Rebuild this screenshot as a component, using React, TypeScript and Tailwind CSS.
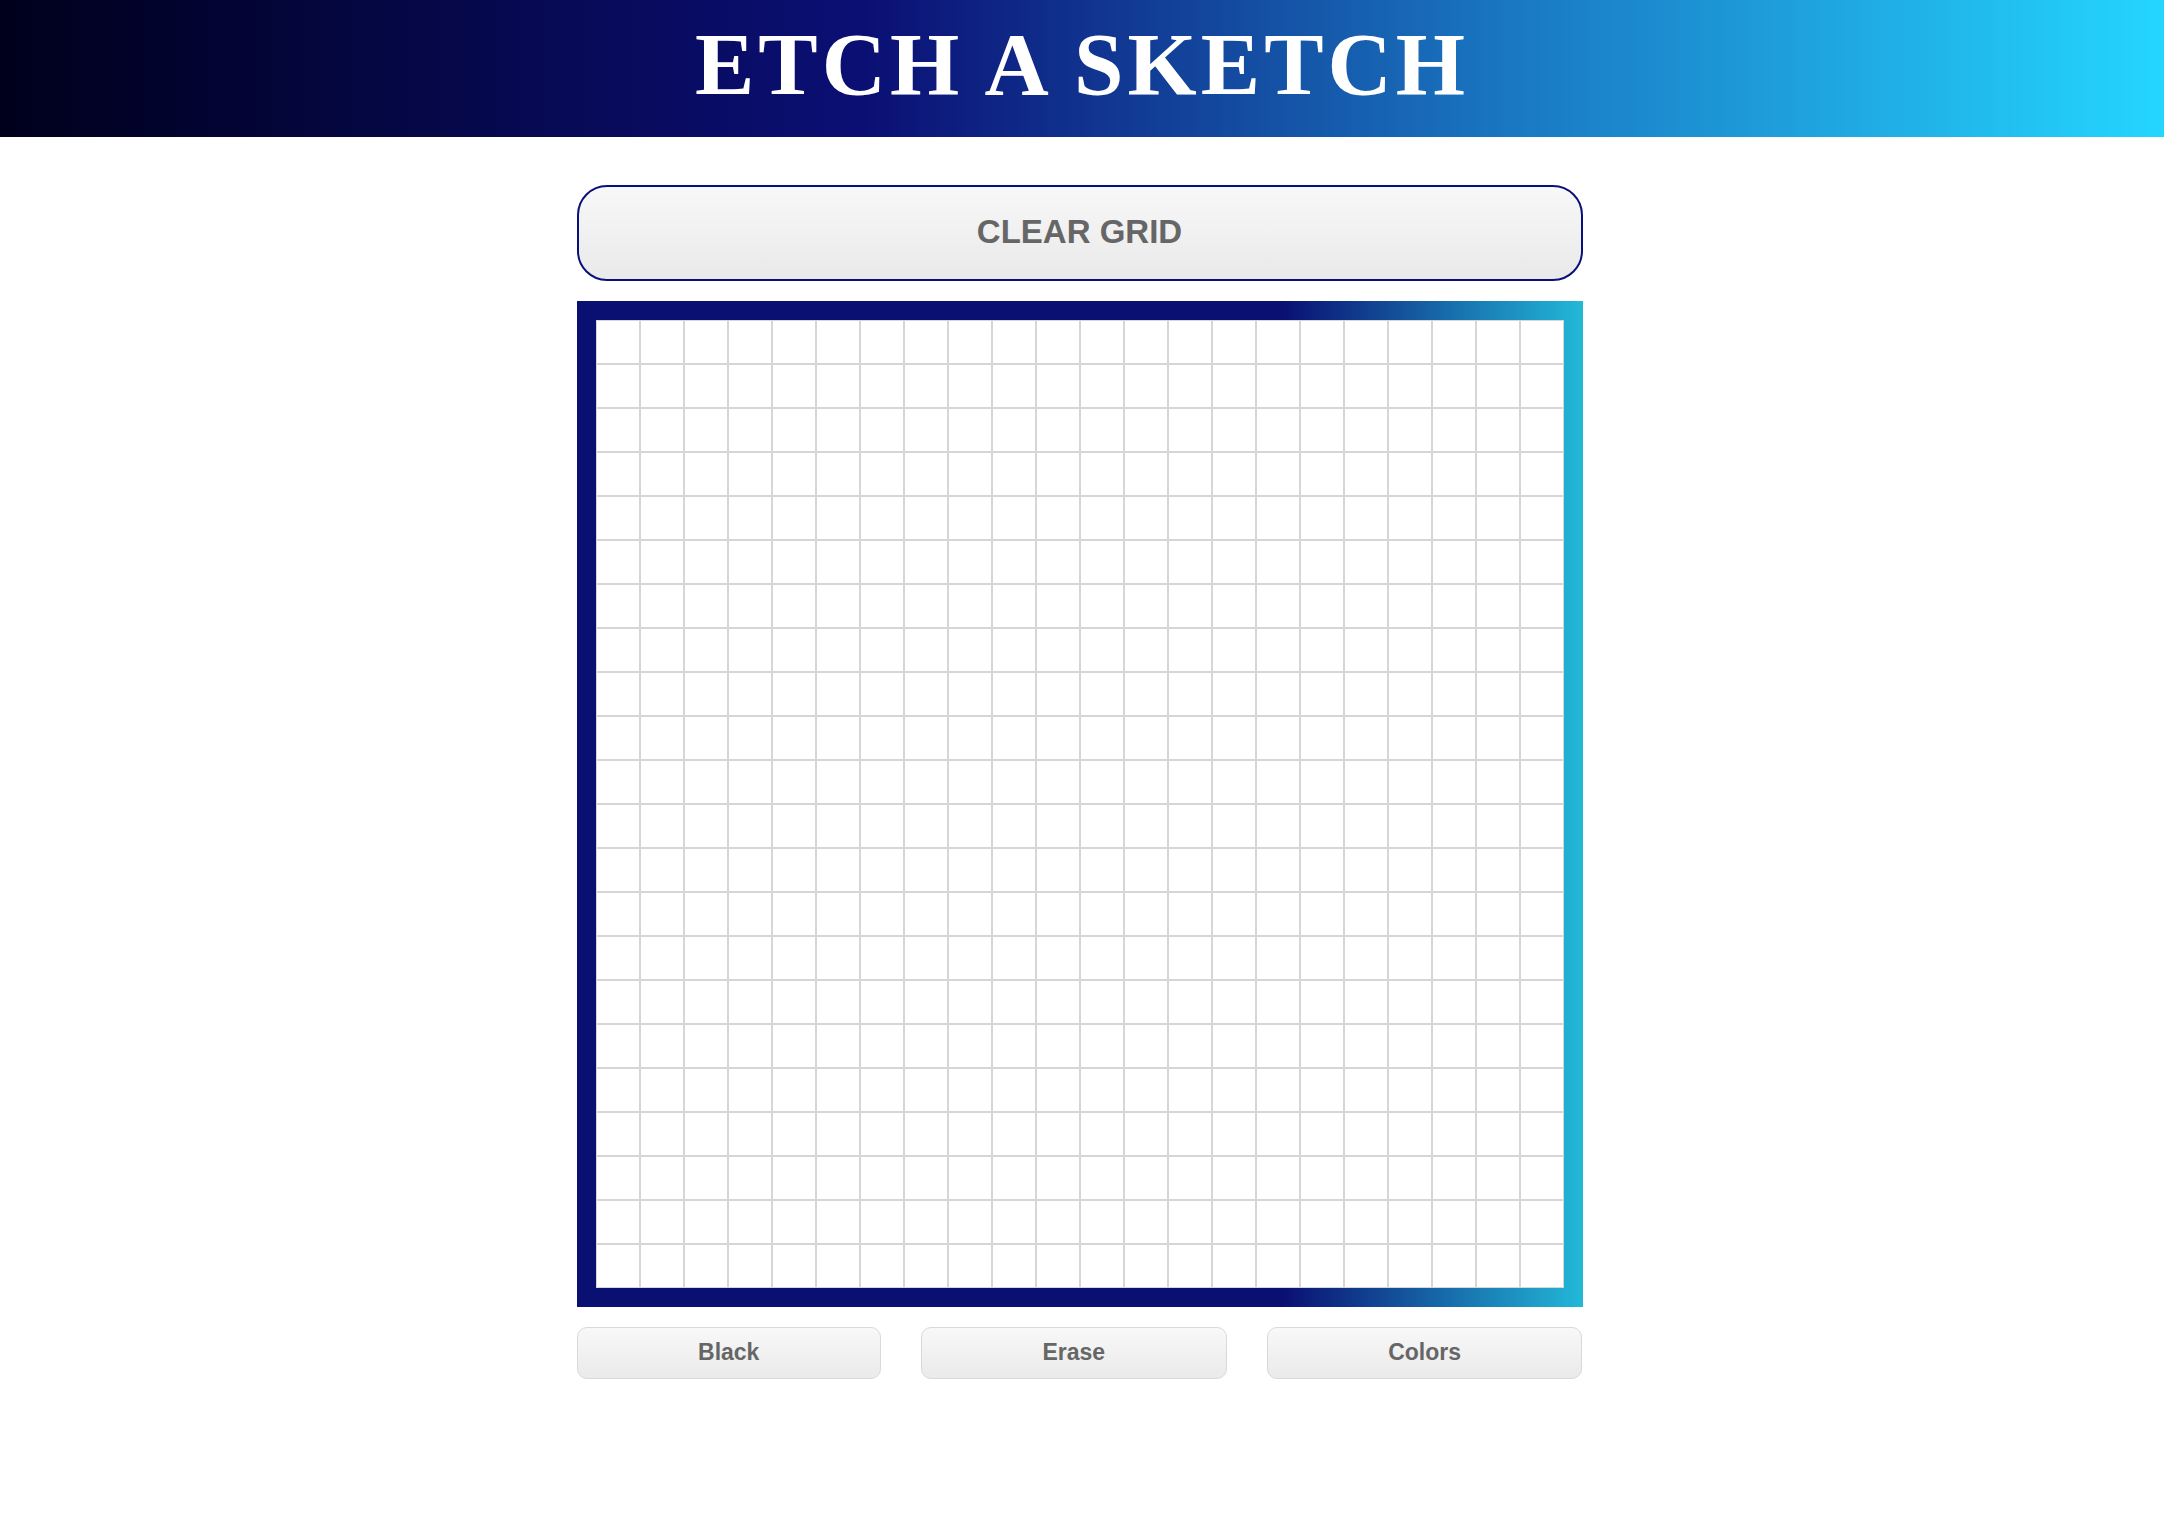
import React, { useState } from "react";

const SIZE = 22;

type Mode = "black" | "erase" | "colors";

function randomColor() {
  const h = Math.floor(Math.random() * 360);
  return `hsl(${h}, 80%, 55%)`;
}

export default function App() {
  const [cells, setCells] = useState<string[]>(() =>
    Array(SIZE * SIZE).fill("#ffffff")
  );
  const [mode, setMode] = useState<Mode>("black");

  const paint = (i: number) => {
    const color =
      mode === "black" ? "#000000" : mode === "erase" ? "#ffffff" : randomColor();
    setCells((prev) => {
      const next = [...prev];
      next[i] = color;
      return next;
    });
  };

  const clear = () => setCells(Array(SIZE * SIZE).fill("#ffffff"));

  return (
    <div className="min-h-screen bg-white font-['Liberation_Sans',Arial,sans-serif]">
      <header className="flex h-[137px] w-[2164px] items-center justify-center bg-[linear-gradient(to_right,#00001c_0%,#0b0f74_40%,#1a78c2_70%,#24d6ff_100%)] pb-[8px]">
        <h1 className="font-['Liberation_Serif','Times_New_Roman',serif] text-[89px] font-bold leading-none tracking-[4px] text-white">
          ETCH A SKETCH
        </h1>
      </header>

      <main className="flex justify-center pr-[11px] pt-[48px]">
        <div className="flex w-[1006px] flex-col">
          <button
            onClick={clear}
            className="h-[96px] w-full rounded-[30px] border-2 border-[#0b0f78] bg-[linear-gradient(to_bottom,#f8f8f8,#e9e9e9)] pb-[2px] text-[33px] font-bold text-[#666666]"
          >
            CLEAR GRID
          </button>

          <div className="mt-[20px] bg-[linear-gradient(to_right,#0a0f72_0%,#0a0f72_70%,#22b8d8_100%)] p-[19px]">
            <div className="grid grid-cols-[repeat(22,44px)] grid-rows-[repeat(22,44px)] bg-white">
              {cells.map((c, i) => (
                <div
                  key={i}
                  onMouseEnter={() => paint(i)}
                  className="border border-[#d6d6d6]"
                  style={{ backgroundColor: c }}
                />
              ))}
            </div>
          </div>

          <div className="mt-[20px] flex gap-[40px]">
            {(
              [
                ["black", "Black"],
                ["erase", "Erase"],
                ["colors", "Colors"],
              ] as [Mode, string][]
            ).map(([m, label]) => (
              <button
                key={m}
                onClick={() => setMode(m)}
                className="h-[52px] flex-auto rounded-[10px] border border-[#d9d9d9] bg-[linear-gradient(to_bottom,#f8f8f8,#eaeaea)] pb-[2px] text-[23px] font-bold text-[#666666]"
              >
                {label}
              </button>
            ))}
          </div>
        </div>
      </main>
    </div>
  );
}
